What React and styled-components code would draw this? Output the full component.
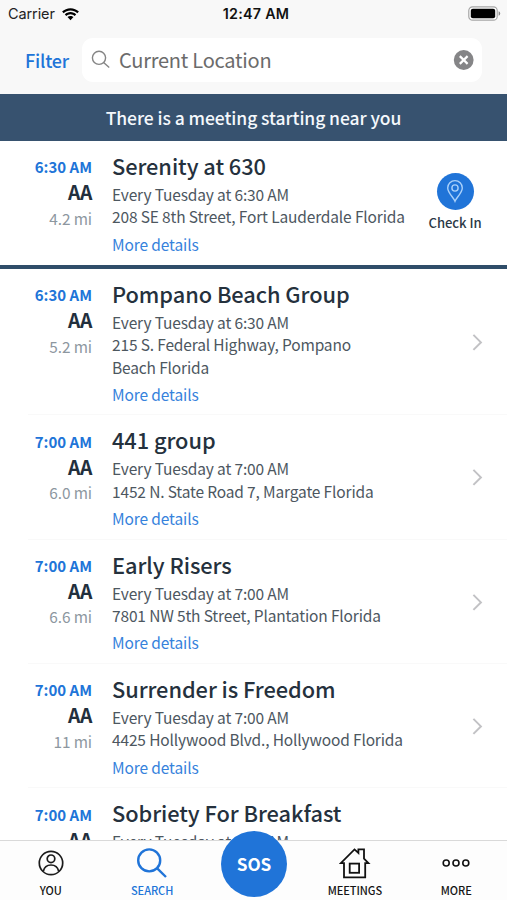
import React from "react";
import styled, { createGlobalStyle } from "styled-components";

const BLUE = "#2074d8";

const GlobalStyle = createGlobalStyle`
  * { box-sizing: border-box; }
  body {
    margin: 0;
    background: #fff;
    font-family: "Noto Sans CJK SC", "Noto Sans", sans-serif;
    overflow: hidden;
  }
  button { border: 0; padding: 0; background: none; font: inherit; cursor: pointer; }
`;

const Screen = styled.div`
  width: 507px;
  height: 900px;
  display: flex;
  flex-direction: column;
  overflow: hidden;
  background: #fff;
`;

const Header = styled.header`
  flex: none;
  height: 94px;
  background: #f8f8f8;
`;

const StatusBar = styled.div`
  height: 28px;
  display: grid;
  grid-template-columns: 1fr auto 1fr;
  align-items: center;
  padding: 0 6px 0 8px;
  font-family: Inter, sans-serif;
  font-size: 14.5px;
  line-height: 28px;
  color: #222;
`;

const Carrier = styled.div`
  display: flex;
  align-items: center;
  gap: 7px;
  letter-spacing: -0.1px;
`;

const Clock = styled.div`
  padding-left: 3px;
  font-weight: 600;
  font-size: 14.3px;
  letter-spacing: 0.25px;
  color: #111;
`;

const Battery = styled.svg`
  justify-self: end;
  margin-top: -2px;
`;

const SearchRow = styled.div`
  display: flex;
  align-items: center;
  padding: 10px 25px 0;
`;

const FilterButton = styled.button`
  width: 57px;
  text-align: left;
  color: ${BLUE};
  font-size: 18px;
  font-weight: 500;
  letter-spacing: -0.2px;
  line-height: 43px;
`;

const SearchField = styled.div`
  flex: 1;
  height: 44px;
  display: flex;
  align-items: center;
  padding: 0 8px 0 9px;
  border-radius: 11px;
  background: #fff;
`;

const SearchText = styled.span`
  flex: 1;
  margin-left: 8px;
  font-size: 20px;
  letter-spacing: -0.24px;
  line-height: 44px;
  color: #6b6b6b;
`;

const Banner = styled.div`
  flex: none;
  height: 47px;
  background: #37526f;
  color: #f4f8fc;
  text-align: center;
  font-size: 17.5px;
  font-weight: 500;
  letter-spacing: -0.07px;
  line-height: 47px;
`;

const List = styled.main`
  flex: 1;
  min-height: 0;
  overflow: hidden;
`;

const Row = styled.article`
  display: flex;
  min-height: 124.3px;
  margin-left: 28px;
  padding: 9.9px 0 9.3px;
  border-bottom: 1px solid #f9f9f9;
`;

const FeaturedRow = styled(Row)`
  height: 128px;
  margin-left: 0;
  padding-left: 28px;
  border-bottom: 4px solid #2f4d69;
`;

const Facts = styled.div`
  width: 64px;
  flex: none;
  text-align: right;
`;

const Time = styled.div`
  font-size: 15px;
  font-weight: 700;
  line-height: 24px;
  margin-top: 4.4px;
  color: ${BLUE};
`;

const Kind = styled.div`
  font-size: 19.3px;
  font-weight: 700;
  line-height: 27.4px;
  letter-spacing: -0.3px;
  color: #222f3d;
`;

const Distance = styled.div`
  font-size: 15.4px;
  line-height: 22px;
  letter-spacing: -0.1px;
  color: #8d979f;
`;

const Details = styled.div`
  width: 300px;
  margin-left: 20px;
  flex: none;
`;

const Title = styled.h2`
  margin: 0 0 1.9px;
  font-size: 21.8px;
  font-weight: 500;
  line-height: 30px;
  letter-spacing: -0.06px;
  color: #25313d;
  white-space: nowrap;
`;

const Line = styled.div`
  font-size: 15.5px;
  line-height: 22.5px;
  letter-spacing: -0.15px;
  color: #4d575f;
  white-space: pre-line;
`;

const MoreLink = styled.button`
  display: block;
  margin-top: 4.9px;
  font-size: 15.5px;
  line-height: 22px;
  letter-spacing: -0.12px;
  color: #3682dc;
`;

const Action = styled.div`
  flex: 1;
  display: flex;
  justify-content: flex-end;
  align-items: center;
  padding-right: 24px;
`;

const CheckIn = styled.button`
  width: 64px;
  margin: 22px 0 0 11px;
  align-self: flex-start;
  display: flex;
  flex-direction: column;
  align-items: center;
  font-size: 13.1px;
  font-weight: 500;
  line-height: 20px;
  letter-spacing: -0.05px;
  color: #2b3946;
  white-space: nowrap;
`;

const PinDisc = styled.span`
  width: 37px;
  height: 37px;
  margin-bottom: 3px;
  border-radius: 50%;
  display: flex;
  align-items: center;
  justify-content: center;
  background: ${BLUE};
`;

const TabBar = styled.nav`
  flex: none;
  height: 60px;
  display: grid;
  grid-template-columns: repeat(5, 1fr);
  border-top: 1px solid #d9d9d9;
  background: #fdfdfd;
`;

const Tab = styled.button`
  display: flex;
  flex-direction: column;
  align-items: center;
  color: ${(p) => (p.$active ? BLUE : "#151515")};
  font-size: 11px;
  font-weight: 500;
  letter-spacing: -0.05px;
  line-height: 14px;
`;

const TabIcon = styled.span`
  height: 42px;
  padding-top: 2px;
  display: flex;
  align-items: center;
`;

const SosButton = styled.button`
  justify-self: center;
  width: 66px;
  height: 66px;
  margin: -10px 0 0 1px;
  border-radius: 50%;
  position: relative;
  background: ${BLUE};
  color: #fff;
  font-size: 17.2px;
  font-weight: 700;
  letter-spacing: -0.1px;
  line-height: 64px;
`;

const WifiIcon = () => (
  <svg width="17" height="13" viewBox="0 0 17 13" fill="#000">
    <path d="M8.5 0.2C5.2 0.2 2.3 1.5 0.1 3.5L1.7 5.2C3.5 3.5 5.9 2.5 8.5 2.5S13.5 3.5 15.3 5.2L16.9 3.5C14.7 1.5 11.8 0.2 8.5 0.2Z" />
    <path d="M8.5 4.1C6.3 4.1 4.3 5 2.8 6.4L4.4 8C5.5 7 6.9 6.3 8.5 6.3S11.5 7 12.6 8L14.2 6.4C12.7 5 10.7 4.1 8.5 4.1Z" />
    <path d="M8.5 7.9C7.3 7.9 6.3 8.4 5.5 9.1L8.5 12.2L11.5 9.1C10.7 8.4 9.7 7.9 8.5 7.9Z" />
  </svg>
);

const BatteryIcon = () => (
  <Battery width="33" height="15" viewBox="0 0 33 15">
    <rect x="0.8" y="0.8" width="28.4" height="13.4" rx="3.8" fill="#fff" stroke="#a5a5a5" strokeWidth="1.2" />
    <rect x="2.8" y="2.7" width="24.4" height="9.6" rx="2" fill="#000" />
    <path d="M30.6 5.2Q32.2 5.7 32.2 7.5T30.6 9.8Z" fill="#888" />
  </Battery>
);

const FieldSearchIcon = () => (
  <svg width="20" height="20" viewBox="0 0 20 20" fill="none" stroke="#858585" strokeWidth="1.4">
    <circle cx="8" cy="7.8" r="6.6" />
    <path d="M12.6 12.4L18.2 17.4" />
  </svg>
);

const ClearIcon = () => (
  <svg width="21" height="21" viewBox="0 0 21 21">
    <circle cx="10.7" cy="10" r="9.9" fill="#858587" />
    <path d="M6.8 6.1L14.6 13.9M14.6 6.1L6.8 13.9" stroke="#fff" strokeWidth="2.2" />
  </svg>
);

const PinIcon = () => (
  <svg width="18" height="24" viewBox="0 0 18 24" fill="none" stroke="#a9d0fa" strokeWidth="1.4">
    <path d="M9 22.2C7.5 18.4 1.7 13.6 1.7 8.9A7.3 7.3 0 0 1 16.3 8.9C16.3 13.6 10.5 18.4 9 22.2Z" />
    <circle cx="9" cy="9" r="3.1" />
  </svg>
);

const Chevron = () => (
  <svg width="11" height="18" viewBox="0 0 11 18" fill="none" stroke="#c2c2c5" strokeWidth="2">
    <path d="M1.4 1.9L8.9 9.4L1.4 16.9" />
  </svg>
);

const YouIcon = () => (
  <svg width="26" height="26" viewBox="0 0 26 26" fill="none" stroke="#1b1b1b" strokeWidth="1.7">
    <circle cx="13" cy="13" r="11.7" />
    <circle cx="13" cy="8.8" r="3.8" />
    <path d="M5.4 21.2C6.2 17.2 9 15 13 15S19.8 17.2 20.6 21.2" />
  </svg>
);

const SearchIcon = () => (
  <svg width="32" height="32" viewBox="0 0 32 32" fill="none" stroke={BLUE} strokeWidth="2.4">
    <circle cx="13.2" cy="13.4" r="11" />
    <path d="M21.2 21.4L30 30" />
  </svg>
);

const HomeIcon = () => (
  <svg width="32" height="32" viewBox="0 0 32 32" fill="none" stroke="#111" strokeWidth="1.8">
    <path d="M5 16.1H1.8L15.5 2.4L19.4 6V2.4H25V11.6L29.4 16.1H26.2V30.4H5Z" />
    <rect x="10.7" y="16.6" width="9.4" height="9.2" />
  </svg>
);

const MoreIcon = () => (
  <svg width="28" height="10" viewBox="0 0 28 10" fill="none" stroke="#111" strokeWidth="1.6">
    <circle cx="4.2" cy="5" r="3" />
    <circle cx="14" cy="5" r="3" />
    <circle cx="23.8" cy="5" r="3" />
  </svg>
);

const meetings = [
  { time: "6:30 AM", distance: "4.2 mi", title: "Serenity at 630", address: "208 SE 8th Street, Fort Lauderdale Florida", featured: true },
  { time: "6:30 AM", distance: "5.2 mi", title: "Pompano Beach Group", address: "215 S. Federal Highway, Pompano\nBeach Florida" },
  { time: "7:00 AM", distance: "6.0 mi", title: "441 group", address: "1452 N. State Road 7, Margate Florida" },
  { time: "7:00 AM", distance: "6.6 mi", title: "Early Risers", address: "7801 NW 5th Street, Plantation Florida" },
  { time: "7:00 AM", distance: "11 mi", title: "Surrender is Freedom", address: "4425 Hollywood Blvd., Hollywood Florida" },
  { time: "7:00 AM", title: "Sobriety For Breakfast" },
];

const Meeting = ({ time, distance, title, address, featured }) => {
  const Container = featured ? FeaturedRow : Row;
  return (
    <Container>
      <Facts>
        <Time>{time}</Time>
        <Kind>AA</Kind>
        {distance && <Distance>{distance}</Distance>}
      </Facts>
      <Details>
        <Title>{title}</Title>
        <Line>Every Tuesday at {time}</Line>
        {address && (
          <>
            <Line>{address}</Line>
            <MoreLink>More details</MoreLink>
          </>
        )}
      </Details>
      {featured && (
        <CheckIn>
          <PinDisc>
            <PinIcon />
          </PinDisc>
          Check In
        </CheckIn>
      )}
      {!featured && address && (
        <Action>
          <Chevron />
        </Action>
      )}
    </Container>
  );
};

export default function App() {
  return (
    <>
      <GlobalStyle />
      <Screen>
        <Header>
          <StatusBar>
            <Carrier>
              Carrier
              <WifiIcon />
            </Carrier>
            <Clock>12:47 AM</Clock>
            <BatteryIcon />
          </StatusBar>
          <SearchRow>
            <FilterButton>Filter</FilterButton>
            <SearchField>
              <FieldSearchIcon />
              <SearchText>Current Location</SearchText>
              <ClearIcon />
            </SearchField>
          </SearchRow>
        </Header>
        <Banner>There is a meeting starting near you</Banner>
        <List>
          {meetings.map((m) => (
            <Meeting key={m.title} {...m} />
          ))}
        </List>
        <TabBar>
          <Tab>
            <TabIcon>
              <YouIcon />
            </TabIcon>
            YOU
          </Tab>
          <Tab $active>
            <TabIcon>
              <SearchIcon />
            </TabIcon>
            SEARCH
          </Tab>
          <SosButton>SOS</SosButton>
          <Tab>
            <TabIcon>
              <HomeIcon />
            </TabIcon>
            MEETINGS
          </Tab>
          <Tab>
            <TabIcon>
              <MoreIcon />
            </TabIcon>
            MORE
          </Tab>
        </TabBar>
      </Screen>
    </>
  );
}
